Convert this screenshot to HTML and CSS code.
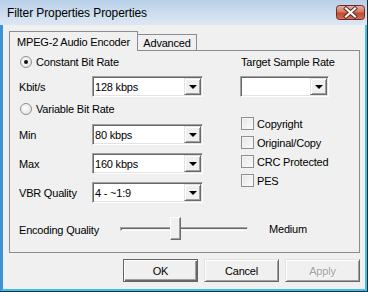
FILE: index.html
```html
<!DOCTYPE html>
<html lang="en">
<head>
  <meta charset="UTF-8" />
  <title>Filter Properties Properties</title>
  <link rel="stylesheet" href="styles.css">
</head>
<body>
  <div class="window">
    <div class="titlebar">
      <span class="title">Filter Properties Properties</span>
      <svg class="close" width="29" height="15" viewBox="0 0 29 15">
        <defs>
          <linearGradient id="closeGrad" x1="0" y1="0" x2="0" y2="1">
            <stop offset="0" stop-color="#e8b2a6"/>
            <stop offset="0.45" stop-color="#d27a66"/>
            <stop offset="0.55" stop-color="#c44a31"/>
            <stop offset="1" stop-color="#d2705a"/>
          </linearGradient>
        </defs>
        <rect x="0.5" y="0.5" width="28" height="14" rx="3" fill="url(#closeGrad)" stroke="#6e2b24"/>
        <path d="M10 3.5 L19 11.5 M19 3.5 L10 11.5" stroke="#5a241e" stroke-width="4" stroke-linecap="square"/>
        <path d="M10 3.5 L19 11.5 M19 3.5 L10 11.5" stroke="#fff" stroke-width="2.2" stroke-linecap="square"/>
      </svg>
    </div>

    <div class="frame">
      <div class="tabs">
        <div class="tab tab-active">MPEG-2 Audio Encoder</div>
        <div class="tab tab-other">Advanced</div>
      </div>

      <div class="panel">
        <div class="columns">
          <div class="col-left">
            <div class="radio-row"><span class="radio checked"></span>Constant Bit Rate</div>
            <div class="field field-first">
              <span class="field-label">Kbit/s</span>
              <div class="combo combo-wide">128 kbps<span class="combo-btn"></span></div>
            </div>
            <div class="radio-row radio-second"><span class="radio"></span>Variable Bit Rate</div>
            <div class="field field-min">
              <span class="field-label">Min</span>
              <div class="combo combo-wide">80 kbps<span class="combo-btn"></span></div>
            </div>
            <div class="field field-next">
              <span class="field-label">Max</span>
              <div class="combo combo-wide">160 kbps<span class="combo-btn"></span></div>
            </div>
            <div class="field field-next">
              <span class="field-label">VBR Quality</span>
              <div class="combo combo-wide">4 - ~1:9<span class="combo-btn"></span></div>
            </div>
          </div>

          <div class="col-right">
            <div class="right-label">Target Sample Rate</div>
            <div class="combo combo-small"><span class="combo-btn"></span></div>
            <div class="checks">
              <div class="check-row"><span class="checkbox"></span>Copyright</div>
              <div class="check-row"><span class="checkbox"></span>Original/Copy</div>
              <div class="check-row"><span class="checkbox"></span>CRC Protected</div>
              <div class="check-row"><span class="checkbox"></span>PES</div>
            </div>
          </div>
        </div>

        <div class="quality">
          <span class="quality-label">Encoding Quality</span>
          <div class="slider">
            <div class="slider-track"></div>
            <div class="slider-thumb"></div>
          </div>
          <span class="quality-value">Medium</span>
        </div>
      </div>

      <div class="buttons">
        <button class="btn btn-default">OK</button>
        <button class="btn">Cancel</button>
        <button class="btn" disabled>Apply</button>
      </div>
    </div>
  </div>
</body>
</html>
```

FILE: styles.css
```css
* { box-sizing: border-box; margin: 0; padding: 0; }
body {
  width: 368px; height: 292px;
  overflow: hidden;
  background: #fff;
  font-family: "Liberation Sans", Arial, sans-serif;
  font-size: 11px;
  letter-spacing: -0.2px;
  color: #000;
}
.window {
  width: 368px; height: 292px;
  display: flex; flex-direction: column;
  border-right: 1px solid #1c2b3b;
  border-bottom: 1px solid #1c2b3b;
}

/* title bar */
.titlebar {
  height: 25px; flex: none;
  display: flex; justify-content: space-between; align-items: flex-start;
  background: linear-gradient(#b9d0e9, #d3e1f0 70%, #dce7f3);
}
.title {
  font-size: 12px;
  letter-spacing: -0.1px;
  line-height: 14px;
  padding: 6px 0 0 7px;
}
.close { display: block; margin: 5px 2px 0 0; }

/* client area */
.frame {
  flex: 1;
  display: flex; flex-direction: column;
  background: #f0f0f0;
  border-left: 3px solid #3d92d5;
  border-right: 2px solid #3cc2ea;
  border-bottom: 2px solid #3cc2ea;
  padding: 6px 5px 0 6px;
}

/* tabs */
.tabs {
  display: flex; align-items: flex-end;
  height: 20px;
  margin-bottom: -1px;
}
.tab {
  display: flex; align-items: center; justify-content: center;
  background: #f0f0f0;
  border: 1px solid #898c95;
  border-bottom: none;
  position: relative;
}
.tab-active { width: 129px; height: 20px; z-index: 2; }
.tab-other { width: 59px; height: 17px; border-left: none; z-index: 0; }

.panel {
  position: relative; z-index: 1;
  height: 203px;
  background: #f0f0f0;
  border: 1px solid #898c95;
}

/* two columns */
.columns {
  display: flex;
  gap: 37px;
  padding: 1px 0 0 9px;
}
.col-left { width: 184px; display: flex; flex-direction: column; }
.col-right { display: flex; flex-direction: column; }

.radio-row {
  height: 20px;
  display: flex; align-items: center;
  padding-left: 1px;
}
.radio-second { margin-top: 2px; }
.radio {
  width: 12px; height: 12px;
  margin-right: 4px;
  border-radius: 50%;
  border: 1px solid #8e8f8f;
  background: radial-gradient(circle at 40% 40%, #fff, #dcdcdc);
  display: flex; align-items: center; justify-content: center;
}
.radio.checked::after {
  content: "";
  width: 4px; height: 4px;
  border-radius: 50%;
  background: #111;
}

.field { height: 21px; display: flex; align-items: center; }
.field-first { margin-top: 4px; }
.field-min { margin-top: 5px; }
.field-next { margin-top: 8px; }
.field-label { width: 73px; }

/* combo boxes */
.combo {
  height: 21px;
  display: flex; align-items: center; justify-content: space-between;
  padding-left: 2px;
  background: #fff;
  border: 1px solid;
  border-color: #a0a0a0 #fff #fff #a0a0a0;
  box-shadow: inset 1px 1px 0 #696969, inset -1px -1px 0 #e3e3e3;
}
.combo-wide { width: 111px; }
.combo-small { width: 89px; margin-top: 4px; justify-content: flex-end; }
.combo-btn {
  width: 17px; height: 17px;
  margin-right: 1px;
  background: #f0f0f0;
  border: 1px solid;
  border-color: #e3e3e3 #696969 #696969 #e3e3e3;
  box-shadow: inset 1px 1px 0 #fff, inset -1px -1px 0 #a0a0a0;
  display: flex; align-items: center; justify-content: center;
}
.combo-btn::after {
  content: "";
  border-left: 4px solid transparent;
  border-right: 4px solid transparent;
  border-top: 4px solid #000;
  margin-top: 1px;
}

.right-label { height: 20px; display: flex; align-items: center; padding-left: 1px; }

.checks { margin-top: 17px; display: flex; flex-direction: column; }
.check-row {
  height: 19px;
  display: flex; align-items: center;
  padding-left: 1px;
}
.checkbox {
  width: 13px; height: 13px;
  margin-right: 3px;
  background: linear-gradient(135deg, #e6e6e6, #fbfbfb);
  border: 1px solid #8e8f8f;
  box-shadow: inset 1px 1px 0 #f4f4f4;
}

/* slider row */
.quality {
  height: 23px;
  margin-top: 14px;
  display: flex; align-items: center;
  padding-left: 9px;
}
.quality-label { width: 101px; padding-top: 2px; }
.slider { position: relative; width: 128px; height: 23px; }
.slider-track {
  margin-top: 10px;
  height: 4px;
  border: 1px solid;
  border-color: #a0a0a0 #fff #fff #a0a0a0;
  box-shadow: inset 1px 1px 0 #696969;
}
.slider-thumb {
  position: absolute;
  left: 50px; top: 0;
  width: 11px; height: 23px;
  background: #f0f0f0;
  border: 1px solid;
  border-color: #fff #696969 #696969 #fff;
  box-shadow: inset -1px -1px 0 #a0a0a0;
}
.quality-value { margin-left: 21px; }

/* dialog buttons */
.buttons {
  display: flex; justify-content: flex-end;
  gap: 6px;
  margin-top: 6px;
}
.btn {
  width: 75px; height: 23px;
  font: inherit;
  letter-spacing: inherit;
  color: #000;
  background: #f0f0f0;
  border: 1px solid;
  border-color: #e3e3e3 #696969 #696969 #e3e3e3;
  box-shadow: inset 1px 1px 0 #fff, inset -1px -1px 0 #a0a0a0;
}
.btn-default { border-color: #646464; box-shadow: inset 1px 1px 0 #fff, inset -1px -1px 0 #696969, inset -2px -2px 0 #a0a0a0; }
.btn[disabled] { color: #a0a0a0; text-shadow: 1px 1px 0 #fff; }
```
